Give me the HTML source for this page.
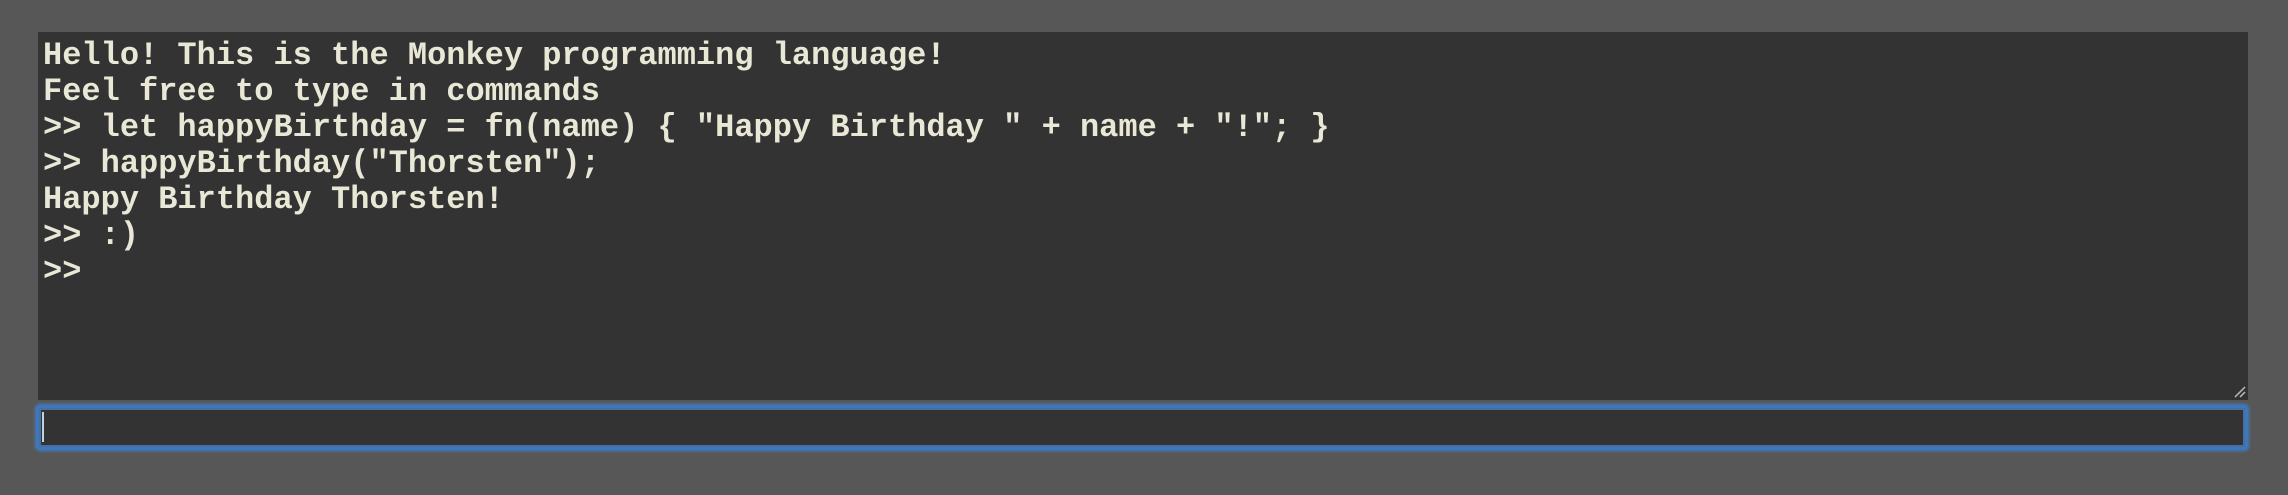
<!DOCTYPE html>
<html><head><style>
html,body{margin:0;padding:0;background:#575757;width:2288px;height:495px;overflow:hidden}
.ta{position:absolute;left:38px;top:32px;width:2210px;height:368px;background:#333333;box-sizing:border-box;padding:6px 5px;font-family:"Liberation Mono","Courier New",monospace;font-weight:bold;font-size:32px;line-height:36px;color:#e9e7d6;white-space:pre}
.grip{position:absolute;right:2px;bottom:2px;width:14px;height:14px}
.inp{position:absolute;left:36px;top:405px;width:2212px;height:45px;box-sizing:border-box;border-radius:4px;background:#333;border:3px solid #3a78c0;box-shadow:0 0 0 2px #4a6f9c inset, 0 0 3px 1px #4a7ab8}
.caret{position:absolute;left:3px;top:4px;width:2px;height:30px;background:#bcd3ee}
</style></head><body>
<div class="ta">Hello! This is the Monkey programming language!
Feel free to type in commands
&gt;&gt; let happyBirthday = fn(name) { "Happy Birthday " + name + "!"; }
&gt;&gt; happyBirthday("Thorsten");
Happy Birthday Thorsten!
&gt;&gt; :)
&gt;&gt;<svg class="grip" viewBox="0 0 14 14"><path d="M3 13L13 3M8 13L13 8" stroke="#bbb" stroke-width="1.5"/></svg></div>
<div class="inp"><div class="caret"></div></div>
</body></html>
